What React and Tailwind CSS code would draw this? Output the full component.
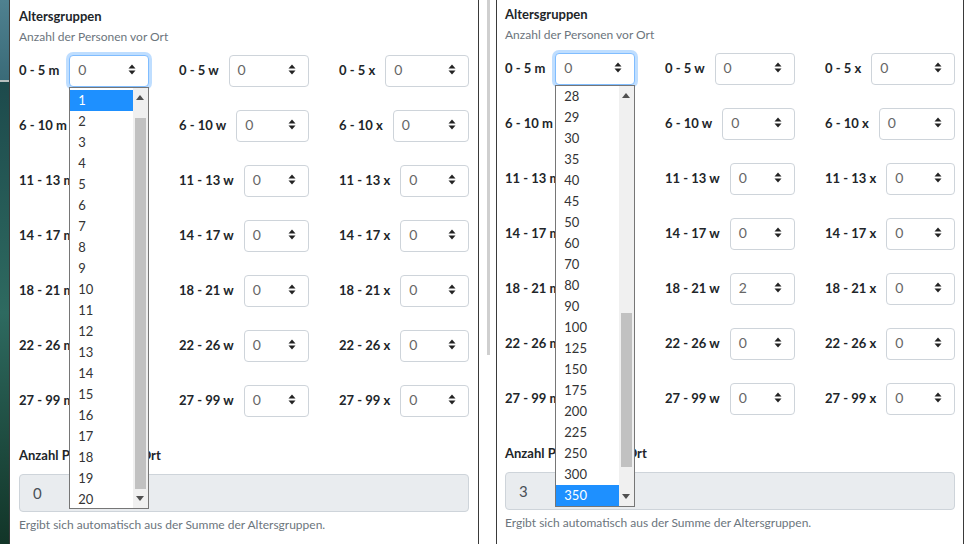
const groups = ["0 - 5", "6 - 10", "11 - 13", "14 - 17", "18 - 21", "22 - 26", "27 - 99"];
const sexes = ["m", "w", "x"];

function SortIcon() {
    return (
        <svg width="8" height="11" viewBox="0 0 8 11" className="shrink-0">
            <path d="M4 0.5L7.5 4.5H0.5Z" fill="#222" />
            <path d="M0.5 6.5H7.5L4 10.5Z" fill="#222" />
        </svg>
    );
}

function FakeSelect({ value, focused, children }) {
    return (
        <div className="relative flex-1 min-w-0">
            <div
                className={`flex items-center justify-between h-[32px] pl-[8px] pr-[12px] pb-[3px] rounded-[4px] bg-white border ${
                    focused
                        ? "border-[#80bdff] shadow-[0_0_0_3px_rgba(0,123,255,0.25)]"
                        : "border-[#ced4da]"
                }`}
            >
                <span className="text-[14px] text-[#666]">{value}</span>
                <SortIcon />
            </div>
            {children}
        </div>
    );
}

function Dropdown({ items, active, padTop, thumbTop, thumbHeight }) {
    return (
        <div className="absolute left-0 top-full z-10 w-[80px] h-[422px] bg-white border border-[#767676] flex overflow-hidden">
            {/* list */}
            <div className={`flex-1 flex flex-col ${padTop}`}>
                {items.map((it) => (
                    <div
                        key={it}
                        className={`h-[21px] shrink-0 flex items-center pl-[8px] text-[13px] leading-none ${
                            it === active ? "bg-[#1e90ff] text-white" : "text-[#333]"
                        }`}
                    >
                        {it}
                    </div>
                ))}
            </div>
            {/* scrollbar */}
            <div className="relative w-[15px] h-full bg-[#f0f0f0]">
                <svg width="8" height="5" viewBox="0 0 8 5" className="absolute left-[3px] top-[7px]">
                    <path d="M4 0L8 5H0Z" fill="#505050" />
                </svg>
                <div
                    className="absolute left-[2px] w-[11px] bg-[#c1c1c1]"
                    style={{ top: thumbTop, height: thumbHeight }}
                />
                <svg width="8" height="5" viewBox="0 0 8 5" className="absolute left-[3px] bottom-[7px]">
                    <path d="M0 0H8L4 5Z" fill="#505050" />
                </svg>
            </div>
        </div>
    );
}

function Panel({ className, values, total, dropdown }) {
    return (
        <div className={`h-full bg-white border-x border-[#3a3a3a] ${className}`}>
            <div className="text-[13px] leading-[20px] font-bold text-[#212529]">Altersgruppen</div>
            <div className="mt-[2px] text-[12px] leading-[18px] text-[#6c757d]">Anzahl der Personen vor Ort</div>

            <div className="mt-[9px] flex flex-col gap-[23px]">
                {groups.map((g, r) => (
                    <div key={g} className="grid grid-cols-3 gap-[30px]">
                        {sexes.map((s, c) => (
                            <div key={s} className="flex items-center gap-[10px]">
                                <span className="text-[13px] font-bold text-[#212529] whitespace-nowrap">
                                    {g} {s}
                                </span>
                                <FakeSelect value={values[`${r}-${c}`] ?? "0"} focused={r === 0 && c === 0}>
                                    {r === 0 && c === 0 && dropdown}
                                </FakeSelect>
                            </div>
                        ))}
                    </div>
                ))}
            </div>

            <div className="mt-[28px] text-[13px] leading-[20px] font-bold text-[#212529]">Anzahl Personen vor Ort</div>
            <div className="mt-[9px] h-[38px] flex items-center pl-[13px] rounded-[4px] bg-[#e9ecef] border border-[#ced4da] text-[15px] text-[#495057]">
                {total}
            </div>
            <div className="mt-[4px] text-[12px] leading-[18px] text-[#6c757d]">
                Ergibt sich automatisch aus der Summe der Altersgruppen.
            </div>
        </div>
    );
}

export default function App() {
    const left = Array.from({ length: 20 }, (_, i) => String(i + 1));
    const right = ["28", "29", "30", "35", "40", "45", "50", "60", "70", "80", "90", "100", "125", "150", "175", "200", "225", "250", "300", "350"];

    return (
        <div
            className="flex w-[972px] h-[544px] overflow-hidden bg-white"
            style={{ fontFamily: "Lato, 'Liberation Sans', sans-serif" }}
        >
            {/* desktop strip */}
            <div className="w-[9px] h-full flex flex-col">
                <div className="h-[80px] bg-gradient-to-b from-[#4f8190] to-[#3a6b78]" />
                <div className="h-[2px] bg-[#b8c0c0]" />
                <div className="flex-1 bg-gradient-to-b from-[#1d4a4c] via-[#2e6a60] to-[#123528]" />
            </div>

            <Panel
                className="w-[470px] pl-[9px] pr-[9px] pt-[6px]"
                values={{}}
                total="0"
                dropdown={<Dropdown items={left} active="1" padTop="pt-[2px]" thumbTop={30} thumbHeight={371} />}
            />

            {/* gap between windows */}
            <div className="w-[17px] h-full bg-white flex justify-center">
                <div className="w-[3px] h-[355px] bg-[#cfcfcf] ml-[2px]" />
            </div>

            <Panel
                className="w-[468px] pl-[8px] pr-[8px] pt-[4px]"
                values={{ "4-1": "2" }}
                total="3"
                dropdown={<Dropdown items={right} active="350" padTop="pt-0" thumbTop={227} thumbHeight={154} />}
            />

            <div className="flex-1 h-full bg-white" />
        </div>
    );
}
